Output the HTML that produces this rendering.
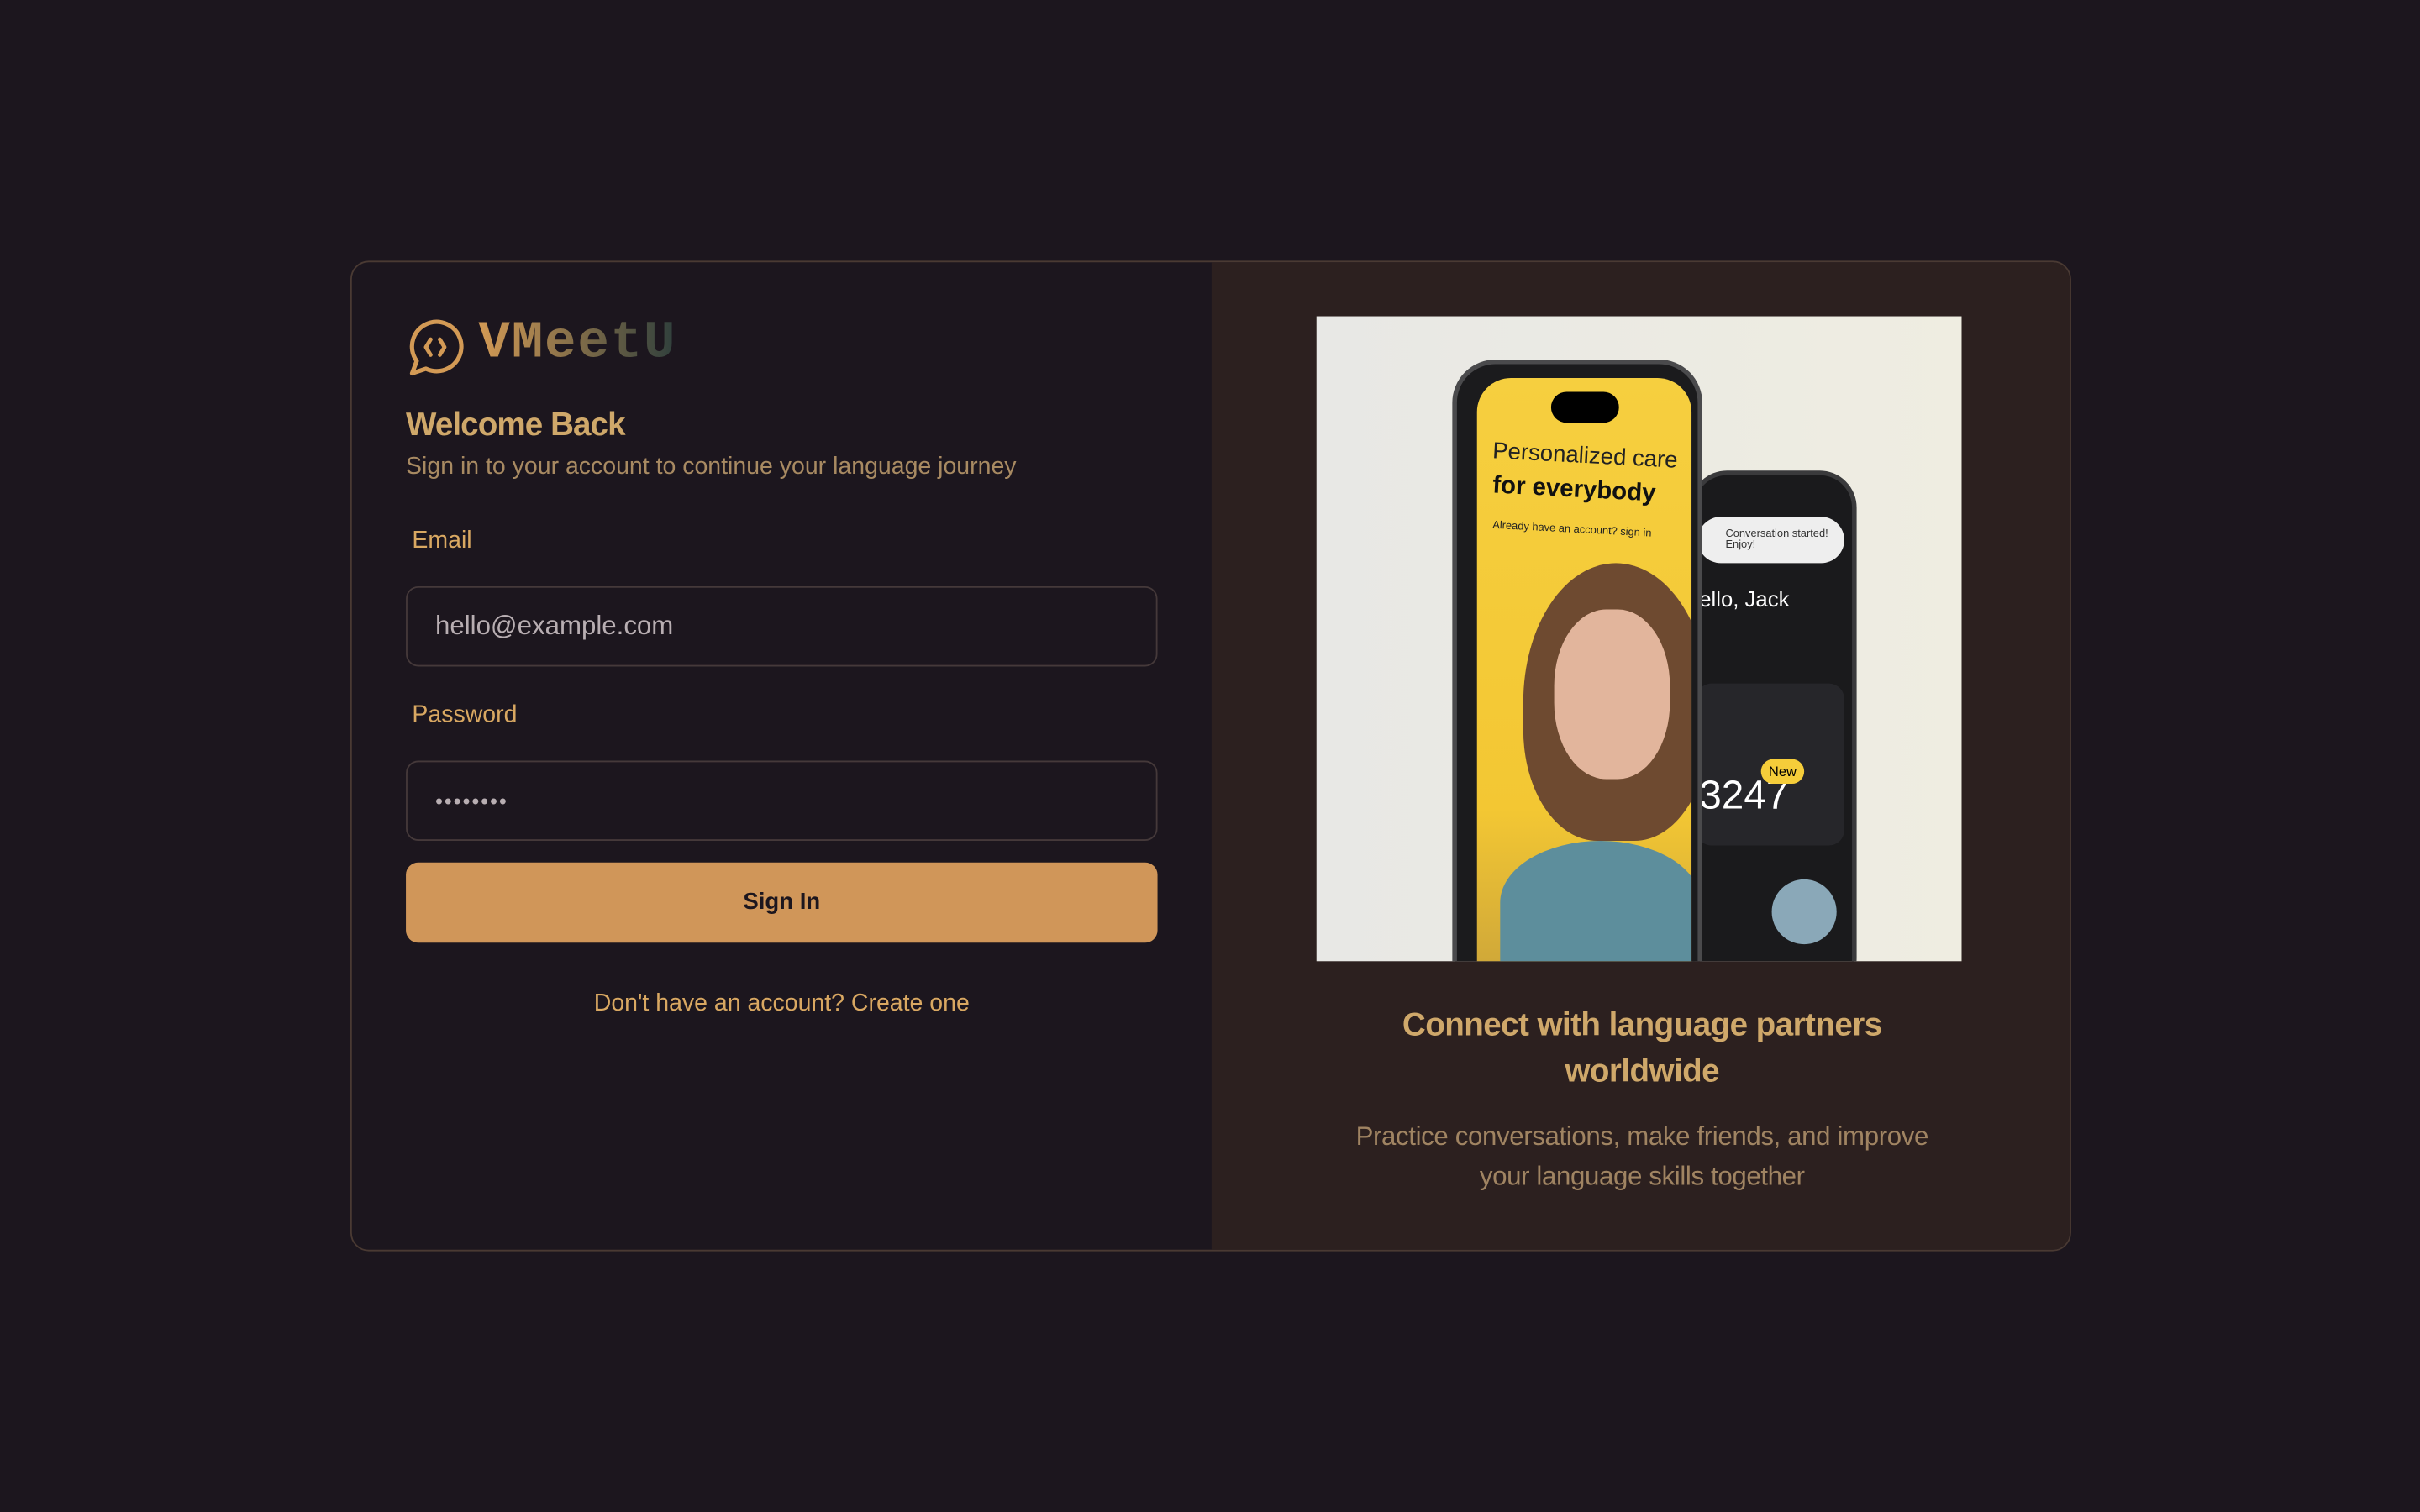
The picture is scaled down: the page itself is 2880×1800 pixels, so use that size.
<!DOCTYPE html>
<html><head><meta charset="utf-8"><style>
*{margin:0;padding:0;box-sizing:border-box}
html,body{width:2880px;height:1800px;background:#1c161e;overflow:hidden}
#s{position:absolute;left:0;top:0;width:1568px;height:980px;transform:scale(1.83673);transform-origin:0 0;font-family:"Liberation Sans",sans-serif}
.a{position:absolute}
.card{left:227px;top:169px;width:1115px;height:642px;border:1px solid #4a3a33;border-radius:12px;overflow:hidden;background:#1c161e}
.right{left:557px;top:0;width:558px;height:642px;background:#2c201f}
.lbl{color:#d9a862;font-size:15.5px}
.inp{left:35px;width:487px;height:52px;border:1px solid #45393a;border-radius:8px;background:#1c161e;color:#b8aeb2;font-size:17px;padding-left:18px;line-height:50px}
</style></head><body><div id="s">
<div class="a card">
 <svg class="a" style="left:35px;top:37px" width="38" height="38" viewBox="0 0 38 38"><path d="M4 35 L7 27 A16 16 0 1 1 13 32 Z" fill="none" stroke="#d39a55" stroke-width="2.8" stroke-linejoin="round"/><path d="M16 13 L13 18 L16 23 M22 13 L25 18 L22 23" fill="none" stroke="#d39a55" stroke-width="2.6" stroke-linecap="round" stroke-linejoin="round"/></svg>
 <div class="a" style="left:82px;top:34px;font-family:'Liberation Mono',monospace;font-weight:bold;font-size:34px;letter-spacing:1px;background:linear-gradient(90deg,#d39a55,#2f3f3c);-webkit-background-clip:text;color:transparent">VMeetU</div>
 <div class="a" style="left:35px;top:94px;font-size:21px;font-weight:bold;color:#cfa86a;letter-spacing:-0.5px">Welcome Back</div>
 <div class="a" style="left:35px;top:124px;font-size:15.5px;color:#a88a62">Sign in to your account to continue your language journey</div>
 <div class="a lbl" style="left:39px;top:172px">Email</div>
 <div class="a inp" style="top:210px">hello@example.com</div>
 <div class="a lbl" style="left:39px;top:285px">Password</div>
 <div class="a inp" style="top:323px;font-size:14px;letter-spacing:1px">••••••••</div>
 <div class="a" style="left:35px;top:389px;width:487px;height:52px;border-radius:8px;background:#d09659;color:#1c161e;font-weight:bold;font-size:15px;text-align:center;line-height:52px">Sign In</div>
 <div class="a" style="left:35px;top:472px;width:487px;text-align:center;font-size:15.5px;color:#d9a862">Don't have an account? Create one</div>
 <div class="a right">
  <div class="a" style="left:68px;top:35px;width:418px;height:418px;overflow:hidden;background:linear-gradient(90deg,#e8e8e5,#efede1)">
   <div class="a" style="left:242px;top:100px;width:108px;height:340px;background:#1a1a1c;border-radius:24px;border:3px solid #3a3a3c"></div>
   <div class="a" style="left:247px;top:130px;width:95px;height:30px;background:#eee;border-radius:15px;font-size:7px;color:#333;padding:8px 0 0 18px">Conversation started! Enjoy!</div>
   <div class="a" style="left:248px;top:175px;color:#fff;font-size:14px">ello, Jack</div>
   <div class="a" style="left:246px;top:238px;width:96px;height:105px;background:#26262a;border-radius:10px"></div>
   <div class="a" style="left:248px;top:295px;color:#fff;font-size:26px">3247</div>
   <div class="a" style="left:288px;top:287px;background:#f5cd3a;border-radius:10px;font-size:9px;padding:3px 5px">New</div>
   <div class="a" style="left:295px;top:365px;width:42px;height:42px;border-radius:50%;background:#8aa8b8"></div>
   <div class="a" style="left:88px;top:28px;width:162px;height:420px;background:#1b1b1d;border-radius:28px;border:3px solid #4a4a4c"></div>
   <div class="a" style="left:104px;top:40px;width:139px;height:400px;background:linear-gradient(#f6cf3f,#f3c733 70%,#c9a23a);border-radius:22px 22px 0 0;overflow:hidden">
    <div class="a" style="left:48px;top:9px;width:44px;height:20px;background:#000;border-radius:10px"></div>
    <div class="a" style="left:10px;top:42px;font-size:15px;color:#222;transform:rotate(3deg);white-space:nowrap">Personalized care</div>
    <div class="a" style="left:10px;top:64px;font-size:16px;font-weight:bold;color:#111;transform:rotate(3deg);white-space:nowrap">for everybody</div>
    <div class="a" style="left:10px;top:95px;font-size:7px;color:#222;transform:rotate(3deg);white-space:nowrap">Already have an account? sign in</div>
    <div class="a" style="left:30px;top:120px;width:120px;height:180px;border-radius:50% 50% 40% 40%;background:#6e4a30"></div>
    <div class="a" style="left:50px;top:150px;width:75px;height:110px;border-radius:45%;background:#e2b59c"></div>
    <div class="a" style="left:15px;top:300px;width:130px;height:80px;border-radius:50% 50% 0 0;background:#5d8e9c"></div>
   </div>
  </div>
  <div class="a" style="left:0;top:480px;width:558px;text-align:center;font-size:21px;font-weight:bold;color:#cfa86a;line-height:30px;letter-spacing:-0.3px">Connect with language partners<br>worldwide</div>
  <div class="a" style="left:0;top:554px;width:558px;text-align:center;font-size:17px;color:#a08462;line-height:26px;letter-spacing:-0.2px">Practice conversations, make friends, and improve<br>your language skills together</div>
 </div>
</div>
</div></body></html>
